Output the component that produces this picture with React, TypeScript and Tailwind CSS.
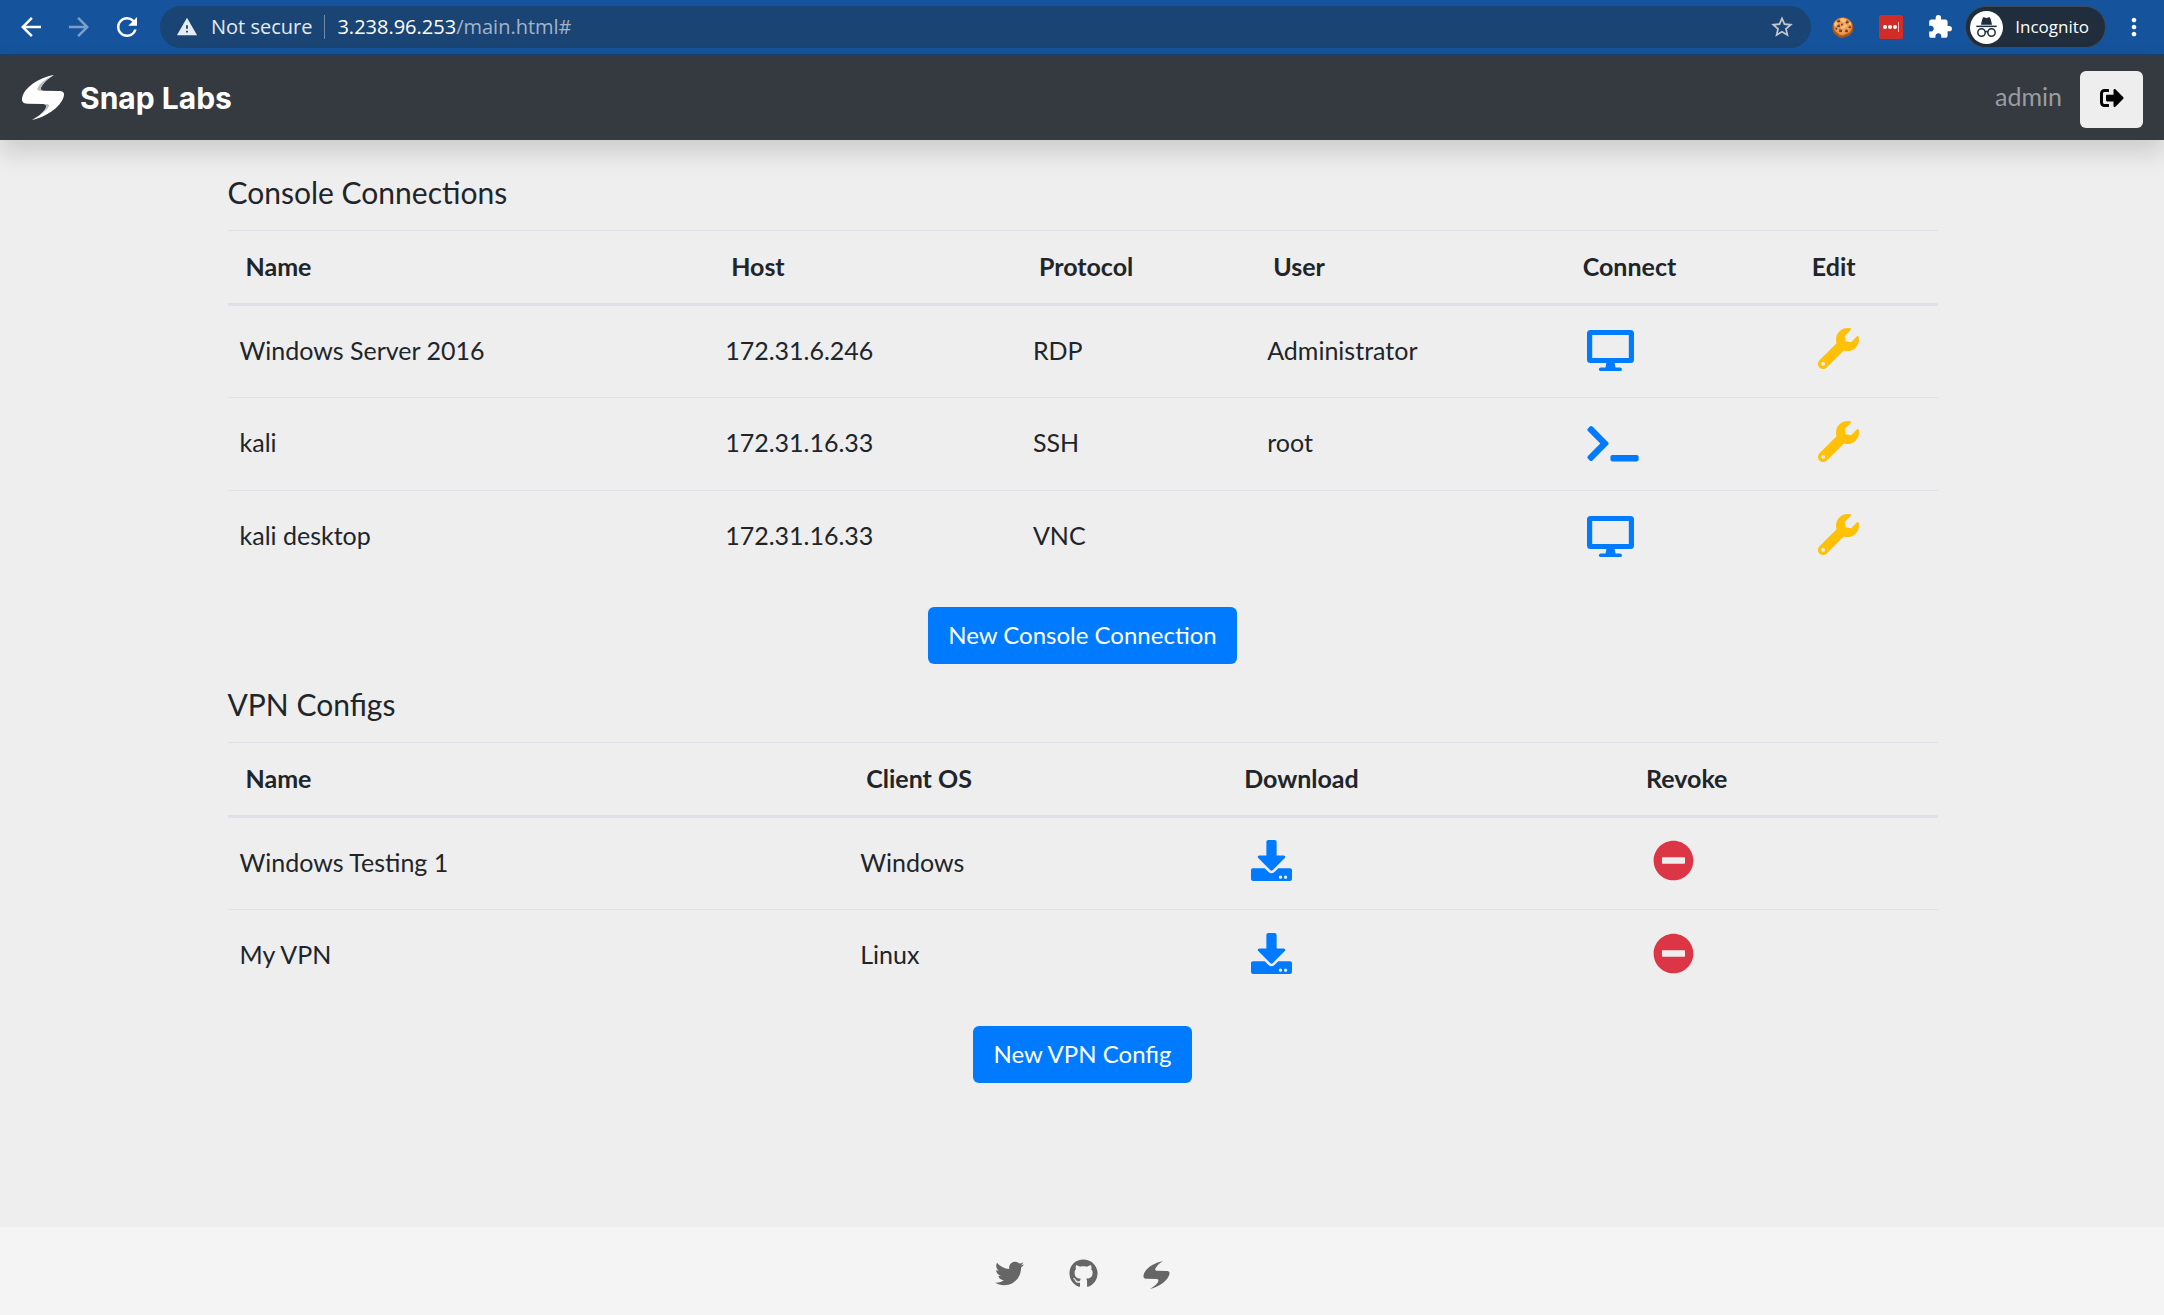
import React from 'react';
import { FaDownload, FaGithub, FaMinusCircle, FaSignOutAlt, FaTerminal, FaTwitter, FaWrench } from 'react-icons/fa';
import { MdArrowBack, MdArrowForward, MdExtension, MdMoreVert, MdRefresh, MdStarBorder, MdWarning } from 'react-icons/md';

type Connection = { name: string; host: string; protocol: string; user: string; icon: 'desktop' | 'terminal' };

const connections: Connection[] = [
  { name: 'Windows Server 2016', host: '172.31.6.246', protocol: 'RDP', user: 'Administrator', icon: 'desktop' },
  { name: 'kali', host: '172.31.16.33', protocol: 'SSH', user: 'root', icon: 'terminal' },
  { name: 'kali desktop', host: '172.31.16.33', protocol: 'VNC', user: '', icon: 'desktop' },
];

const vpnConfigs = [
  { name: 'Windows Testing 1', os: 'Windows' },
  { name: 'My VPN', os: 'Linux' },
];

function SnapMark({ className, shaded = false }: { className: string; shaded?: boolean }) {
  return (
    <svg viewBox="0 0 126 135" className={className} aria-hidden="true">
      <path
        fill="currentColor"
        d="M96 0C50 8 4 38 0 72c-1 10 6 14 18 14l46 1c11 1 10 9 4 18-8 12-24 22-38 30 50-11 92-45 96-75 1-10-6-12-18-12l-44-1c-10-1-9-8-3-16C69 18 82 8 96 0Z"
      />
      {shaded && (
        <>
          <path fill="#b9bbbd" d="M94 1C70 12 50 28 46 42c-1 5 6 6 18 5-10-1-9-8-3-16C69 18 82 8 94 1Z" />
          <path fill="#b9bbbd" d="M32 134c22-11 44-29 49-41 2-5-5-6-17-6 11 1 10 9 4 18-8 12-22 22-36 29Z" />
        </>
      )}
    </svg>
  );
}

function DesktopIcon() {
  return (
    <svg viewBox="0 0 47 41" className="h-[41px] w-[47px]" fill="currentColor" aria-hidden="true">
      <path
        fillRule="evenodd"
        d="M3.5 0h40A3.5 3.5 0 0 1 47 3.5v26a3.5 3.5 0 0 1-3.5 3.5h-40A3.5 3.5 0 0 1 0 29.500v-26A3.500 3.500 0 0 1 3.500 0ZM5.200 5v23h36.600V5Z"
      />
      <path d="M19.500 32.500h8l1 5h4.500a2 2 0 0 1 2 1.700A1.800 1.800 0 0 1 33.500 41h-20a1.800 1.800 0 0 1-1.700-1.800 2 2 0 0 1 2-1.700h4.700Z" />
    </svg>
  );
}

function IncognitoIcon() {
  return (
    <svg viewBox="0 0 33 33" className="size-[33px]" aria-hidden="true">
      <circle cx="16.500" cy="16.500" r="16.500" fill="#fff" />
      <path fill="#1f2d3d" d="M13.300 6.300c.6-.3 1.600.6 3.200.6s2.600-.9 3.200-.6c.8.400 1.500 3.700 2.300 7.500H11c.8-3.800 1.500-7.100 2.300-7.500Z" />
      <rect x="6.300" y="14.600" width="20.400" height="1.500" fill="#1f2d3d" />
      <g fill="none" stroke="#1f2d3d" strokeWidth="1.500">
        <circle cx="11.500" cy="21.500" r="3.700" />
        <circle cx="21.500" cy="21.500" r="3.700" />
        <path d="M15.100 21.200c.9-.8 1.900-.8 2.800 0" />
      </g>
    </svg>
  );
}

function BrowserBar() {
  return (
    <div className="flex h-[55px] items-center border-b border-[#17406f] bg-[#15539c] pl-4 pr-4 font-['Open_Sans',sans-serif] text-xl text-white">
      <button aria-label="Back" className="text-[30px]"><MdArrowBack /></button>
      <button aria-label="Forward" className="ml-[18px] text-[30px] text-[#7b9fcb]"><MdArrowForward /></button>
      <button aria-label="Reload" className="ml-[18px] text-[30px]"><MdRefresh /></button>
      <div className="ml-[18px] flex h-[42px] flex-1 items-center rounded-full bg-[#1a4474] pl-4 pr-4">
        <button className="flex items-center gap-[13px] text-[#e6ebf1]">
          <MdWarning className="size-[22px]" />
          Not secure
        </button>
        <span className="mx-3 h-6 w-px bg-[#6f8cab]" />
        <label htmlFor="address">3.238.96.253</label>
        <input
          id="address"
          type="text"
          defaultValue="/main.html#"
          className="min-w-0 flex-1 bg-transparent text-[#a3b4c7] outline-none"
        />
        <button aria-label="Bookmark this page" className="text-[26px] text-[#c3c8ce]"><MdStarBorder /></button>
      </div>
      <button aria-label="Cookies" className="ml-5 flex w-6 justify-center text-[19px] leading-6">🍪</button>
      <button aria-label="Password manager" className="ml-6 flex size-6 items-center justify-center gap-px rounded-xs bg-[#d22c28]">
        <span className="size-1 rounded-full bg-white" />
        <span className="size-1 rounded-full bg-white" />
        <span className="size-1 rounded-full bg-white" />
        <span className="h-[10px] w-px bg-[#f0b5b3]" />
      </button>
      <button aria-label="Extensions" className="ml-6 text-[26px]"><MdExtension /></button>
      <button className="ml-3 flex h-[42px] items-center gap-3 rounded-full border border-[#3c4a59] bg-[#1f2d3d] pl-1 pr-4 text-[17px]">
        <IncognitoIcon />
        Incognito
      </button>
      <button aria-label="Menu" className="ml-[14px] text-[28px]"><MdMoreVert /></button>
    </div>
  );
}

function NavBar() {
  return (
    <nav className="relative flex h-[85px] items-center justify-between bg-[#343a40] px-[21px] shadow-[0_12px_24px_rgba(0,0,0,0.15)]">
      <a href="#" className="flex items-center gap-4 pl-px font-['Inter',sans-serif] text-3xl font-bold text-white">
        <SnapMark shaded className="h-[45px] w-[42px]" />
        Snap Labs
      </a>
      <div className="flex items-center gap-[18px]">
        <span className="pb-1 text-[25px] leading-9 text-[#9a9da0]">admin</span>
        <button aria-label="Sign out" className="mt-1 flex h-[57px] w-[63px] items-center justify-center rounded-md bg-[#eee] pb-1 text-2xl text-black">
          <FaSignOutAlt />
        </button>
      </div>
    </nav>
  );
}

function HeadCell({ className, children }: { className: string; children: React.ReactNode }) {
  return (
    <th scope="col" className={`h-[76px] border-t border-b-3 border-t-[#dee2e6] border-b-[#dee2e6] pb-0.5 pl-[18px] text-left font-bold ${className}`}>
      {children}
    </th>
  );
}

const tableClass = 'w-full table-fixed border-separate border-spacing-0 text-[25px] leading-9';
const rowClass = 'h-[93px] first:h-[91px] [&>td]:border-t [&>td]:border-[#dee2e6] first:[&>td]:border-t-0';
const textCell = 'pb-1 pl-3';
const primaryButton = 'mx-auto mt-6 block h-[57px] rounded-md bg-[#007bff] px-5 pb-0.5 text-2xl text-white';
const headingClass = 'mt-[22px] mb-5 text-3xl leading-9';

export default function App() {
  return (
    <div className="flex min-h-screen flex-col bg-[#eee] font-['Lato',sans-serif] text-[#212529]">
      <BrowserBar />
      <NavBar />
      <main className="mx-auto w-full max-w-[1711px] flex-1 pt-3 pl-px">
        <h2 className={headingClass}>Console Connections</h2>
        <table className={tableClass}>
          <thead>
            <tr>
              <HeadCell className="w-[28.4%]">Name</HeadCell>
              <HeadCell className="w-[18%]">Host</HeadCell>
              <HeadCell className="w-[13.7%]">Protocol</HeadCell>
              <HeadCell className="w-[18.1%]">User</HeadCell>
              <HeadCell className="w-[13.4%]">Connect</HeadCell>
              <HeadCell className="w-[8.4%]">Edit</HeadCell>
            </tr>
          </thead>
          <tbody>
            {connections.map((c) => (
              <tr key={c.name} className={rowClass}>
                <td className={textCell}>{c.name}</td>
                <td className={textCell}>{c.host}</td>
                <td className={textCell}>{c.protocol}</td>
                <td className={textCell}>{c.user}</td>
                <td className="pb-0.5 pl-[22px]">
                  <button aria-label={`Connect to ${c.name}`} className="block text-[#007bff]">
                    {c.icon === 'desktop' ? <DesktopIcon /> : <FaTerminal className="h-[41px] w-[52px]" />}
                  </button>
                </td>
                <td className="pb-1.5 pl-6">
                  <button aria-label={`Edit ${c.name}`} className="block text-[#ffc107]">
                    <FaWrench className="size-[41px]" />
                  </button>
                </td>
              </tr>
            ))}
          </tbody>
        </table>
        <button className={primaryButton}>New Console Connection</button>

        <h2 className={headingClass}>VPN Configs</h2>
        <table className={tableClass}>
          <thead>
            <tr>
              <HeadCell className="w-[36.3%]">Name</HeadCell>
              <HeadCell className="w-[22.1%]">Client OS</HeadCell>
              <HeadCell className="w-[23.5%]">Download</HeadCell>
              <HeadCell className="w-[18.1%]">Revoke</HeadCell>
            </tr>
          </thead>
          <tbody>
            {vpnConfigs.map((v) => (
              <tr key={v.name} className={rowClass}>
                <td className={textCell}>{v.name}</td>
                <td className={textCell}>{v.os}</td>
                <td className="pb-1.5 pl-[25px]">
                  <button aria-label={`Download ${v.name}`} className="block text-[#007bff]">
                    <FaDownload className="size-[41px]" />
                  </button>
                </td>
                <td className="pb-1.5 pl-[25px]">
                  <button aria-label={`Revoke ${v.name}`} className="block text-[#dc3545]">
                    <FaMinusCircle className="size-[41px]" />
                  </button>
                </td>
              </tr>
            ))}
          </tbody>
        </table>
        <button className={primaryButton}>New VPN Config</button>
      </main>
      <footer className="flex h-[88px] items-center justify-center gap-[45px] bg-[#f4f4f4] pt-1 text-[29px] text-[#666]">
        <a href="#" aria-label="Twitter"><FaTwitter /></a>
        <a href="#" aria-label="GitHub"><FaGithub /></a>
        <a href="#" aria-label="Snap Labs"><SnapMark className="mt-1 h-7 w-[27px]" /></a>
      </footer>
    </div>
  );
}
